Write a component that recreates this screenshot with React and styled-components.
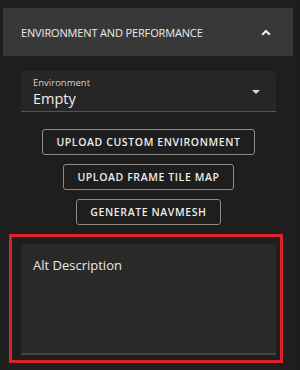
import React, { useState } from 'react';
import styled, { createGlobalStyle } from 'styled-components';

const GlobalStyle = createGlobalStyle`
  html, body {
    margin: 0;
    padding: 0;
    background: #1e1e1e;
  }
  body {
    font-family: 'Open Sans', 'Liberation Sans', sans-serif;
    color: #e6e6e6;
  }
`;

const Page = styled.div`
  width: 300px;
  height: 370px;
  padding-top: 8px;
  box-sizing: border-box;
  background: #1e1e1e;
  border-right: 3px solid #1b1d21;
  overflow: hidden;
`;

const Header = styled.div`
  display: flex;
  align-items: center;
  justify-content: space-between;
  height: 48px;
  margin: 0 4px 0 3px;
  padding: 0 22px 0 18px;
  background: #383838;
  font-size: 11px;
  letter-spacing: -0.15px;
  color: #ececec;
`;

const Content = styled.div`
  padding: 15px 21px 0 21px;
  display: flex;
  flex-direction: column;
  align-items: center;
`;

const Select = styled.div`
  position: relative;
  align-self: stretch;
  height: 41px;
  box-sizing: border-box;
  padding: 6px 12px 0;
  background: #262626;
  border-bottom: 1px solid #555;
  border-radius: 3px 3px 0 0;
  cursor: pointer;
`;

const SelectLabel = styled.div`
  font-size: 9.5px;
  line-height: 12px;
  color: #cfcfcf;
`;

const SelectValue = styled.div`
  font-size: 14.5px;
  line-height: 20px;
  color: #f0f0f0;
`;

const Caret = styled.div`
  position: absolute;
  right: 16px;
  top: 19px;
  width: 0;
  height: 0;
  border-left: 4px solid transparent;
  border-right: 4px solid transparent;
  border-top: 4px solid #d8d8d8;
`;

const Buttons = styled.div`
  display: flex;
  flex-direction: column;
  align-items: center;
  gap: 9px;
  margin-top: 17px;
`;

const OutlineButton = styled.button`
  height: 26px;
  padding: 0 13px;
  background: transparent;
  border: 1px solid #8c8c8c;
  border-radius: 3px;
  color: #ececec;
  font-family: 'Open Sans', 'Liberation Sans', sans-serif;
  font-weight: 600;
  font-size: 10.5px;
  letter-spacing: 0.6px;
  cursor: pointer;
`;

const Highlight = styled.div`
  margin: 9px 0 0 9px;
  width: 274px;
  height: 129px;
  box-sizing: border-box;
  border: 3px solid #d9232b;
  padding: 7px 4px 5px 9px;
`;

const TextArea = styled.textarea`
  display: block;
  width: 100%;
  height: 100%;
  box-sizing: border-box;
  resize: none;
  background: #292929;
  border: none;
  border-bottom: 2px solid #454545;
  border-radius: 4px 4px 0 0;
  padding: 12px 12px;
  color: #e8e8e8;
  font-family: 'Open Sans', 'Liberation Sans', sans-serif;
  font-size: 13px;
  outline: none;
  &::placeholder {
    color: #e8e8e8;
  }
`;

const ChevronUp = () => (
  <svg width="10" height="7" viewBox="0 0 10 7">
    <path d="M1.2 5.8 L5 2 L8.8 5.8" fill="none" stroke="#f2f2f2" strokeWidth="2" />
  </svg>
);

export default function App() {
  const [alt, setAlt] = useState('');
  return (
    <>
      <GlobalStyle />
      <Page>
        <Header>
          <span>ENVIRONMENT AND PERFORMANCE</span>
          <ChevronUp />
        </Header>
        <Content>
          <Select>
            <SelectLabel>Environment</SelectLabel>
            <SelectValue>Empty</SelectValue>
            <Caret />
          </Select>
          <Buttons>
            <OutlineButton>UPLOAD CUSTOM ENVIRONMENT</OutlineButton>
            <OutlineButton>UPLOAD FRAME TILE MAP</OutlineButton>
            <OutlineButton>GENERATE NAVMESH</OutlineButton>
          </Buttons>
        </Content>
        <Highlight>
          <TextArea
            value={alt}
            onChange={(e) => setAlt(e.target.value)}
            placeholder="Alt Description"
          />
        </Highlight>
      </Page>
    </>
  );
}
